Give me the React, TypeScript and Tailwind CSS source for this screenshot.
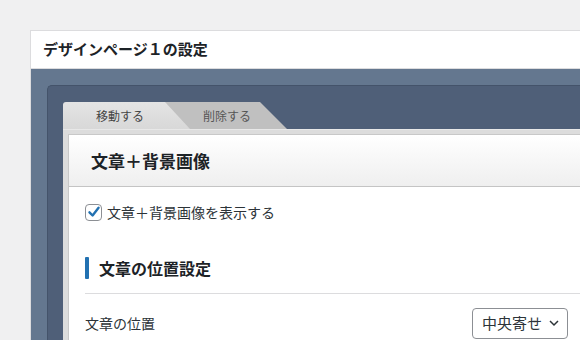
import React from 'react';

const font = { fontFamily: '"Noto Sans CJK JP", "Noto Sans", sans-serif' };

export default function App() {
  return (
    <div
      className="w-[580px] h-[340px] overflow-hidden bg-[#f0f0f1] pt-[30px] pl-[30px]"
      style={font}
    >
      <div className="w-[620px] border border-[#dcdcde] bg-white">
        {/* Page title */}
        <div className="h-[38px] flex items-center pl-[12px] border-b border-[#dcdcde] text-[15px] font-bold text-[#1d2327]">
          デザインページ１の設定
        </div>

        {/* Blue-gray area */}
        <div className="bg-[#64778f] pt-[16px] pl-[16px] h-[280px]">
          <div className="h-full bg-[#4f5f78] rounded-tl-[5px] border-t border-l border-[#44536a] pt-[16px] pl-[15px]">
            {/* Tabs */}
            <div className="flex h-[27px] items-stretch">
              <div className="w-[127px] bg-gradient-to-b from-[#e4e4e4] to-[#d8d8d8] rounded-tl-[3px] flex items-center pl-[33px] text-[12px] text-[#444]">
                移動する
              </div>
              <div
                className="-ml-[25px] w-[122px] bg-[#c0c0c0] flex items-center pl-[38px] text-[12px] text-[#555]"
                style={{ clipPath: 'polygon(0 0, 95px 0, 100% 100%, 25px 100%)' }}
              >
                削除する
              </div>
            </div>

            {/* Frame */}
            <div className="bg-[#dcdcdc] border-t border-[#e8e8e8] pt-[4px] pl-[5px] h-full">
              <div className="bg-white border-t border-l border-[#c8c8c8] h-full">
                <div className="h-[52px] flex items-center pl-[22px] bg-gradient-to-b from-white to-[#efefef] border-b border-[#c4c4c4] text-[17px] font-bold text-[#1d2327]">
                  文章＋背景画像
                </div>

                <div className="pl-[16px] pr-[12px]">
                  <label className="flex items-center gap-[5px] mt-[17px] h-[16px] text-[14px] text-[#2c3338]">
                    <span className="w-[17px] h-[17px] rounded-[4px] border border-[#8c8f94] bg-white flex items-center justify-center">
                      <svg width="14" height="14" viewBox="0 0 20 20">
                        <path
                          d="M3.5 10.5 L8 15 L16.5 4"
                          fill="none"
                          stroke="#2271b1"
                          strokeWidth="3.4"
                          strokeLinecap="round"
                          strokeLinejoin="round"
                        />
                      </svg>
                    </span>
                    文章＋背景画像を表示する
                  </label>

                  <div className="mt-[37px] flex items-center gap-[10px] h-[22px]">
                    <span className="w-[4px] h-[22px] bg-[#2271b1] rounded-[1px]" />
                    <span className="text-[16px] font-bold text-[#1d2327]">文章の位置設定</span>
                  </div>

                  <div className="mt-[14px] border-t border-[#dcdcde] w-[520px]" />

                  <div className="flex items-center h-[32px] mt-[13px] w-[483px] justify-between">
                    <span className="text-[14px] text-[#2c3338]">文章の位置</span>
                    <div className="h-[31px] w-[96px] border border-[#8c8f94] rounded-[4px] bg-white flex items-center pl-[9px] gap-[6px] text-[15px] text-[#2c3338]">
                      中央寄せ
                      <svg width="12" height="12" viewBox="0 0 12 12">
                        <path d="M2 4 L6 8 L10 4" fill="none" stroke="#2c3338" strokeWidth="1.5" />
                      </svg>
                    </div>
                  </div>
                </div>
              </div>
            </div>
          </div>
        </div>
      </div>
    </div>
  );
}
